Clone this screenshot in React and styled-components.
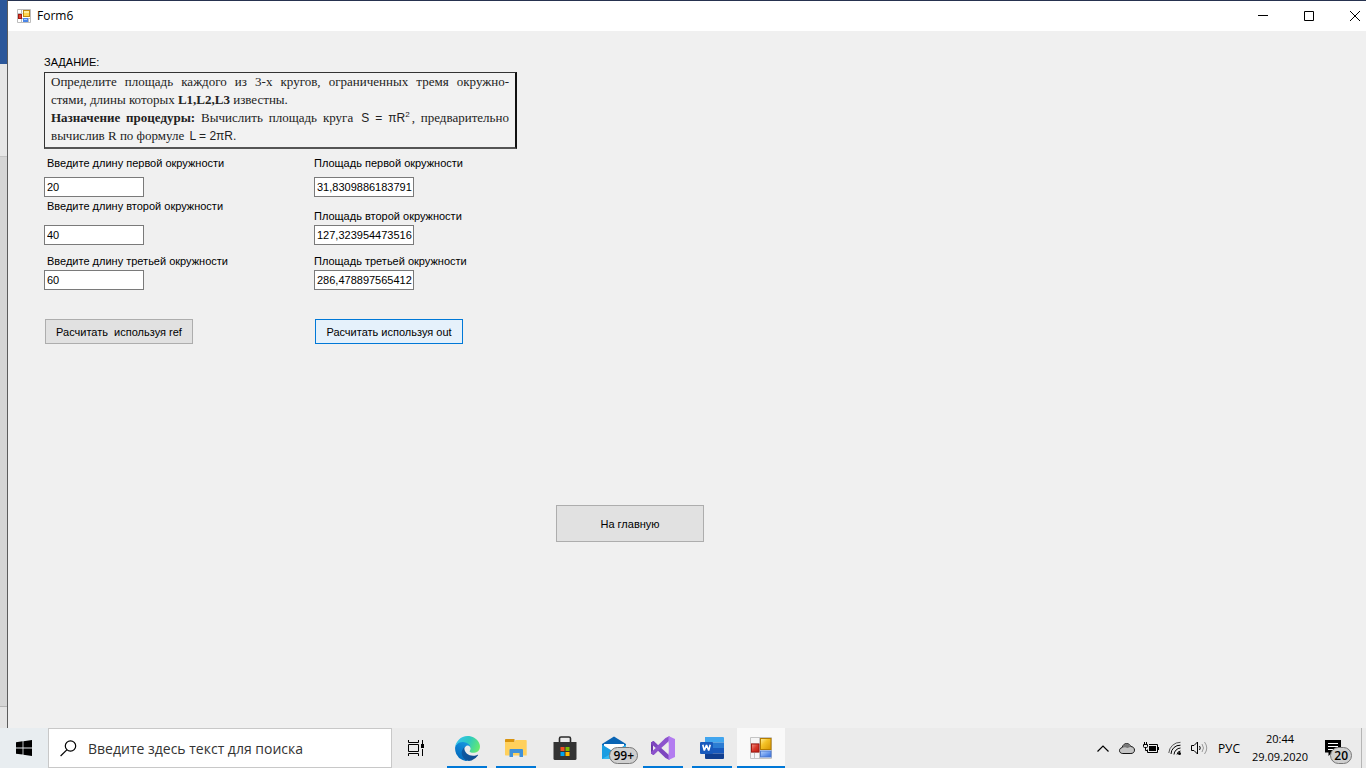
import { useState } from "react";
import styled, { createGlobalStyle } from "styled-components";

const GlobalStyle = createGlobalStyle`
  * {
    box-sizing: border-box;
  }

  body {
    margin: 0;
    overflow: hidden;
    font-family: "Liberation Sans", Arial, sans-serif;
    font-size: 11px;
    color: #000;
  }

  button,
  input {
    font-family: inherit;
    font-size: inherit;
    color: inherit;
  }
`;

const Screen = styled.div`
  display: flex;
  flex-direction: column;
  height: 100vh;
`;

const Desktop = styled.div`
  flex: 1;
  display: flex;
  min-height: 0;
`;

const BackWindow = styled.div`
  width: 7px;
  display: flex;
  flex-direction: column;
  background: #d5d5d5;
`;

const BackHeader = styled.div`
  height: 64px;
  background: #2b579a;
`;

const BackRibbon = styled.div`
  height: 93px;
  background: #e6e6e6;
  border-bottom: 1px solid #c4c4c4;
`;

const BackStatus = styled.div`
  height: 22px;
  margin-top: auto;
  background: #e4e4e4;
  border-top: 1px solid #b4b4b4;
`;

const Window = styled.div`
  flex: 1;
  display: flex;
  flex-direction: column;
  background: #f0f0f0;
  border-top: 1px solid #26324f;
  border-left: 1px solid #5c5c5c;
`;

const TitleBar = styled.header`
  height: 30px;
  display: flex;
  align-items: center;
  gap: 6px;
  padding: 0 6px 0 9px;
  background: #fff;
`;

const WindowTitle = styled.h1`
  flex: 1;
  margin: 0;
  font-family: "Open Sans", sans-serif;
  font-size: 12px;
  font-weight: 400;
  line-height: 16px;
`;

const WindowButtons = styled.div`
  display: flex;
  gap: 36px;
`;

const WindowButton = styled.button`
  display: flex;
  padding: 0;
  border: none;
  background: none;
`;

const Form = styled.main`
  flex: 1;
  padding: 24px 36px;
`;

const TaskLabel = styled.div`
  line-height: 14px;
`;

const TaskBox = styled.section`
  width: 473px;
  margin: 3px 0 7px;
  padding: 0 6px 2px;
  background: #f2f2f2;
  border: 1px solid #333;
  border-right: 2px solid #111;
  border-bottom: 2px solid #555;
  font-family: "Liberation Serif", "Times New Roman", serif;
  font-size: 13px;
  line-height: 18px;
  color: #222;
`;

const TaskLine = styled.div`
  white-space: nowrap;
  text-align-last: ${(props) => (props.$full ? "justify" : "left")};
`;

const Formula = styled.span`
  padding: 0 2px;
  font-family: "Liberation Sans", Arial, sans-serif;
  font-size: 12px;

  sup {
    font-size: 8px;
    line-height: 1;
  }
`;

const Columns = styled.div`
  display: flex;
`;

const Column = styled.div`
  width: 270px;
  display: flex;
  flex-direction: column;
  align-items: flex-start;
`;

const spaces = { none: 0, tight: 2, small: 7, medium: 9, wide: 12 };

const Field = styled.div`
  display: flex;
  flex-direction: column;
  gap: ${(props) => spaces[props.$gap]}px;
  margin-top: ${(props) => spaces[props.$before]}px;
`;

const FieldLabel = styled.label`
  padding-left: ${(props) => (props.$indent ? "3px" : "0")};
  line-height: 14px;
  white-space: nowrap;
`;

const TextBox = styled.input`
  width: 100px;
  height: 20px;
  padding: 0 0 0 2px;
  border: 1px solid #7a7a7a;
  border-radius: 0;
  background: #fff;
  outline: none;
`;

const Button = styled.button`
  height: ${(props) => (props.$large ? "37px" : "25px")};
  width: 148px;
  padding: 0;
  white-space: pre;
  border: 1px solid ${(props) => (props.$focused ? "#0078d7" : "#adadad")};
  background: ${(props) => (props.$focused ? "#e5f1fb" : "#e1e1e1")};
`;

const Actions = styled.div`
  display: flex;
  gap: 122px;
  padding-left: 1px;
  margin-top: 29px;
`;

const HomeRow = styled.div`
  margin-top: 161px;
  padding-left: 512px;
`;

const Taskbar = styled.footer`
  height: 40px;
  display: flex;
  background: #ebebeb;
  font-family: "Open Sans", sans-serif;
`;

const BarButton = styled.button`
  width: 48px;
  display: flex;
  align-items: center;
  justify-content: center;
  padding: 0;
  border: none;
  background: ${(props) => (props.$start ? "#e8edf0" : "none")};
`;

const Search = styled.label`
  width: 344px;
  display: flex;
  align-items: center;
  gap: 11px;
  padding: 0 11px;
  background: #fff;
  border: 1px solid #c8c8c8;
`;

const SearchInput = styled.input`
  flex: 1;
  min-width: 0;
  padding: 0;
  border: none;
  outline: none;
  background: none;
  font-size: 14px;

  &::placeholder {
    color: #333;
    opacity: 1;
  }
`;

const Apps = styled.nav`
  flex: 1;
  display: flex;
  gap: 1px;
  padding-left: 3px;
`;

const AppButton = styled.button`
  position: relative;
  width: 48px;
  display: flex;
  align-items: center;
  justify-content: center;
  padding: 0;
  border: none;
  background: ${(props) => (props.$active ? "#f9f9f9" : "none")};

  &::after {
    content: "";
    display: ${(props) => (props.$running ? "block" : "none")};
    position: absolute;
    bottom: 0;
    left: ${(props) => (props.$active ? "0" : "4px")};
    right: ${(props) => (props.$active ? "0" : "4px")};
    height: 2px;
    background: #0078d7;
  }
`;

const Badge = styled.span`
  position: absolute;
  right: ${(props) => (props.$corner ? "1px" : "0")};
  bottom: 4px;
  height: 17px;
  padding: 0 3px;
  border: 1px solid #777;
  border-radius: 9px;
  background: #cfcfcf;
  font-size: 12px;
  font-weight: 600;
  line-height: 15px;
  color: #000;
`;

const Tray = styled.div`
  display: flex;
  align-items: center;
`;

const TrayButton = styled.button`
  width: 24px;
  height: 40px;
  display: flex;
  align-items: center;
  justify-content: center;
  padding: 0;
  border: none;
  background: none;
`;

const Language = styled.button`
  width: 36px;
  padding: 0;
  border: none;
  background: none;
  font-size: 12px;
`;

const Clock = styled.time`
  width: 66px;
  font-size: 11px;
  line-height: 18px;
  text-align: center;
`;

const Notifications = styled.button`
  position: relative;
  width: 40px;
  height: 40px;
  display: flex;
  align-items: center;
  justify-content: center;
  padding: 0;
  border: none;
  background: none;
`;

const ShowDesktop = styled.button`
  width: 5px;
  height: 40px;
  margin-left: 8px;
  padding: 0;
  border: none;
  border-left: 1px solid #b5b5b5;
  background: none;
`;

const SmallFormIcon = () => (
  <svg width="14" height="14" viewBox="0 0 14 14">
    <path d="M.5.500h13v13H.5zM.5 4.500h5M4.500 .5v13M.5 9.500h13M11.500 9v4" fill="#fff" stroke="#bcbcbc" />
    <rect x="6.500" y="1.500" width="6" height="6" fill="#ffd64f" stroke="#c08a10" />
    <path d="M7 2h5v2H7z" fill="#ffec9c" />
    <rect x="1.500" y="5.500" width="3" height="4" fill="#e0402f" stroke="#a01a12" />
    <path d="M6 9h5v4H6z" fill="#4a86e8" />
    <path d="M7 10h3v1H7z" fill="#a5c8ff" />
  </svg>
);

const FormIcon = () => (
  <svg width="22" height="22" viewBox="0 0 22 22">
    <defs>
      <linearGradient id="formYellow" x1="0" y1="0" x2="1" y2="1">
        <stop offset="0" stopColor="#fff0a0" />
        <stop offset=".4" stopColor="#f5c327" />
        <stop offset="1" stopColor="#d69500" />
      </linearGradient>
      <linearGradient id="formRed" x1="0" y1="0" x2="1" y2="1">
        <stop offset="0" stopColor="#f49a8c" />
        <stop offset=".5" stopColor="#d8392b" />
        <stop offset="1" stopColor="#b81c10" />
      </linearGradient>
      <linearGradient id="formBlue" x1="0" y1="0" x2="1" y2="1">
        <stop offset="0" stopColor="#b5d3ff" />
        <stop offset="1" stopColor="#2d69dd" />
      </linearGradient>
    </defs>
    <path d="M.5.500h21v21H.5zM4.500 15.500v6M.5 15.500h9M.5 6.500h9M9.500 .5v21" fill="#f6f6f6" stroke="#c4c4c4" />
    <rect x="10.500" y="1.500" width="10.500" height="11" fill="url(#formYellow)" stroke="#b47c00" />
    <rect x="1.500" y="7" width="7.500" height="8" fill="url(#formRed)" stroke="#a51910" />
    <rect x="10.500" y="14" width="10.500" height="6" fill="url(#formBlue)" stroke="#4f7bd0" />
  </svg>
);

const StartIcon = () => (
  <svg width="16" height="16" viewBox="0 0 16 16">
    <path d="M0 2.2 6.6 1.3v6.2H0zM7.4 1.2 16 0v7.500H7.4zM0 8.4h6.6v6.2L0 13.7zM7.4 8.4H16V16l-8.6-1.2z" />
  </svg>
);

const SearchIcon = () => (
  <svg width="17" height="17" viewBox="0 0 17 17" fill="none" stroke="#000" strokeWidth="1.2">
    <circle cx="10.5" cy="6" r="5.2" />
    <path d="M6.8 9.8.6 16" />
  </svg>
);

const TaskViewIcon = () => (
  <svg width="18" height="16" viewBox="0 0 18 16" fill="none" stroke="#000">
    <path d="M1.5 0v2.5h10V0M1.5 16v-2.500h10V16M1.5 4.500h10v7h-10zM15.500 0v4M15.500 9v7" />
    <rect x="14" y="4" width="3" height="4" fill="#000" stroke="none" />
  </svg>
);

const EdgeIcon = () => (
  <svg width="25" height="25" viewBox="4 3 257 257">
    <defs>
      <linearGradient id="edgeNavy" x1="0" y1="0" x2="1" y2="0">
        <stop offset="0" stopColor="#0c59a4" />
        <stop offset="1" stopColor="#114a8b" />
      </linearGradient>
      <linearGradient id="edgeBlue" x1=".8" y1="0" x2=".3" y2="1">
        <stop offset="0" stopColor="#1b9de2" />
        <stop offset=".5" stopColor="#0d7fd0" />
        <stop offset="1" stopColor="#0067b8" />
      </linearGradient>
      <linearGradient id="edgeGreen" x1="0" y1=".3" x2="1" y2=".6">
        <stop offset="0" stopColor="#35c1f1" />
        <stop offset=".5" stopColor="#2dc9c0" />
        <stop offset="1" stopColor="#66eb6e" />
      </linearGradient>
    </defs>
    <path
      fill="url(#edgeNavy)"
      d="M235.68 195.46a93.73 93.73 0 0 1-10.54 4.71 101.87 101.87 0 0 1-35.9 6.46c-47.32 0-88.54-32.55-88.54-74.32A31.48 31.48 0 0 1 117.13 105c-42.8 1.8-53.8 46.4-53.8 72.53 0 73.88 68.09 81.37 82.76 81.37 7.91 0 19.84-2.3 27-4.56l1.31-.44a128.34 128.34 0 0 0 66.6-52.8 4 4 0 0 0-5.32-5.64z"
    />
    <path
      fill="url(#edgeBlue)"
      d="M110.34 246.34A79.2 79.2 0 0 1 87.6 225a80.72 80.72 0 0 1 29.53-120c3.12-1.47 8.45-4.13 15.54-4a32.35 32.35 0 0 1 25.69 13 31.88 31.88 0 0 1 6.36 18.66c0-.21 24.46-79.6-80-79.6-43.9 0-80 41.66-80 78.21a130.15 130.15 0 0 0 12.11 56 128 128 0 0 0 156.38 67.11 75.55 75.55 0 0 1-62.78-8z"
    />
    <path
      fill="url(#edgeGreen)"
      d="M156.94 153.78c-.81 1.05-3.3 2.5-3.3 5.66 0 2.61 1.7 5.12 4.72 7.23 14.38 10 41.49 8.68 41.56 8.68a59.56 59.56 0 0 0 30.27-8.35 61.38 61.38 0 0 0 30.43-52.88c.26-22.41-8-37.31-11.34-43.91C228.08 28.76 182.35 3.55 132.61 3.55a128 128 0 0 0-128 126.2c.48-36.54 36.8-66.05 80-66.05 3.5 0 23.46.34 42 10.07 16.34 8.58 24.9 18.94 30.85 29.21 6.18 10.67 7.28 24.15 7.28 29.52 0 5.37-2.74 13.33-7.8 21.28z"
    />
  </svg>
);

const FolderIcon = () => (
  <svg width="22" height="20" viewBox="0 0 22 20">
    <path d="M0 1.8Q0 1 .8 1h8.700v3H0z" fill="#d9940f" />
    <path d="M0 4h9.500l1-2H21q.7 0 .7.7V17.500H.7q-.7 0-.7-.7z" fill="#ffd05c" />
    <path d="M4.500 12q0-1 1-1h11.500q1 0 1 1v7h-3.500v-4H8v4H4.500z" fill="#3f91d9" />
  </svg>
);

const StoreIcon = () => (
  <svg width="24" height="24" viewBox="0 0 24 24">
    <path d="M6.500 7V2.500Q6.500 1 8 1h8q1.500 0 1.500 1.500V7" fill="none" stroke="#2b2b2b" strokeWidth="1.6" />
    <path d="M.5 6h23v16.500q0 1.500-1.500 1.500H2Q.5 24 .5 22.500z" fill="#333" />
    <path d="M7.500 11h4v4h-4z" fill="#f25022" />
    <path d="M12.500 11h4v4h-4z" fill="#7fba00" />
    <path d="M7.500 16h4v4h-4z" fill="#00a4ef" />
    <path d="M12.500 16h4v4h-4z" fill="#ffb900" />
  </svg>
);

const MailIcon = () => (
  <svg width="24" height="24" viewBox="0 0 24 24">
    <path d="M0 8 12 .5 24 8v4H0z" fill="#0a64b4" />
    <path d="M2 8h20v7H2z" fill="#fff" />
    <path d="M0 8.500 12 16l12-7.500V23H0z" fill="#1b9de2" />
    <path d="M0 23 24 9v14z" fill="#35b8f1" />
  </svg>
);

const StudioIcon = () => (
  <svg width="24" height="24" viewBox="0 0 24 24">
    <path d="M0 6.500 2.500 5 6 8.500v7L2.500 19 0 17.500z" fill="#6a35a8" />
    <path d="M0 6.500 2.500 5 18.500 19.500V24L14.500 22 0 8z" fill="#7d45bf" />
    <path d="M0 17.500 2.500 19 18.500 4.500V0L14.500 2 0 16z" fill="#8c52cc" />
    <path d="M2 9.500 4.800 12 2 14.500z" fill="#ebebeb" />
    <path d="M17.500 0 24 3v18l-6.500 3z" fill="#b37cf0" />
    <path d="M17.500 7v10L11.500 12z" fill="#ebebeb" />
  </svg>
);

const WordIcon = () => (
  <svg width="24" height="22" viewBox="0 0 24 22">
    <path d="M5 0h18q1 0 1 1v4.500H5z" fill="#41a5ee" />
    <path d="M5 5.500h19V11H5z" fill="#2b7cd3" />
    <path d="M5 11h19v5.500H5z" fill="#185abd" />
    <path d="M5 16.500h19V21q0 1-1 1H6q-1 0-1-1z" fill="#103f91" />
    <rect x="0" y="5" width="13" height="12" rx="1" fill="#185abd" />
    <path
      d="m2.800 7.800 1.500 5.700 2.200-5.500 2.200 5.500 1.500-5.700"
      fill="none"
      stroke="#fff"
      strokeWidth="1.600"
      strokeLinejoin="bevel"
    />
  </svg>
);

const CloudIcon = () => (
  <svg width="16" height="11" viewBox="0 0 16 11">
    <path
      d="M3.800 10.500C1.900 10.500.5 9.300.5 7.600S1.700 4.800 3.200 4.600C3.600 2.200 5.300.600 7.600.600c2 0 3.400 1 4.100 2.900 2.200.1 3.800 1.500 3.800 3.600s-1.500 3.400-3.600 3.400z"
      fill="#c4c4c4"
      stroke="#111"
    />
    <path d="M3.500 4.700C4 2.300 5.500 1.100 7.500 1.100S10.700 2 11.200 4L8.500 5 6 4.300z" fill="#777" />
  </svg>
);

const BatteryIcon = () => (
  <svg width="16" height="12" viewBox="0 0 16 12" fill="none" stroke="#000">
    <path d="M1.500 0v2M3.500 0v2M.5 2.500h4v2q0 1-1 1h-2q-1 0-1-1zM2.500 5.500v3h2M6 2.500h8.500v8h-10v-3M15.500 5v3" />
    <path d="M6 4h7v5H6z" fill="#000" stroke="none" />
  </svg>
);

const WifiIcon = () => (
  <svg width="14" height="14" viewBox="0 0 14 14" fill="none" stroke="#000">
    <path d="M.8 12A11.500 11.500 0 0 1 12.500 1.300" stroke="#555" />
    <path d="M3 13A9 9 0 0 1 12.500 4.200M6 13.500a7 7 0 0 1 6.500-6.500M9 13.500a4 4 0 0 1 3.500-3.500" />
    <circle cx="11.500" cy="12.500" r="1.500" fill="#000" stroke="none" />
  </svg>
);

const VolumeIcon = () => (
  <svg width="17" height="14" viewBox="0 0 17 14" fill="none" stroke="#000">
    <path d="M.5 4.500h2.500L6.500 1v12L3 9.500H.5z" />
    <path d="M8.500 5q1.500 2 0 4" />
    <path d="M11 3q3 4 0 8M13.500 1q4.500 6 0 12" stroke="#999" />
  </svg>
);

const NoteIcon = () => (
  <svg width="16" height="16" viewBox="0 0 16 16">
    <path d="M0 0h16v12.500H7L3.500 16v-3.500H0z" />
    <path d="M3 3.500h10M3 6.500h10M3 9.500h7" stroke="#fff" />
  </svg>
);

const lengthFields = [
  { id: "l1", label: "Введите длину первой окружности", before: "none", gap: "small" },
  { id: "l2", label: "Введите длину второй окружности", before: "tight", gap: "wide" },
  { id: "l3", label: "Введите длину третьей окружности", before: "medium", gap: "tight" },
];

const areaFields = [
  { id: "s1", label: "Площадь первой окружности", before: "none", gap: "small" },
  { id: "s2", label: "Площадь второй окружности", before: "wide", gap: "tight" },
  { id: "s3", label: "Площадь третьей окружности", before: "medium", gap: "tight" },
];

const apps = [
  { name: "Microsoft Edge", icon: <EdgeIcon />, running: true },
  { name: "Проводник", icon: <FolderIcon />, running: true },
  { name: "Microsoft Store", icon: <StoreIcon /> },
  { name: "Почта", icon: <MailIcon />, badge: "99+" },
  { name: "Visual Studio", icon: <StudioIcon />, running: true },
  { name: "Word", icon: <WordIcon />, running: true },
  { name: "Form6", icon: <FormIcon />, running: true, active: true },
];

const App = () => {
  const [values, setValues] = useState({
    l1: "20",
    l2: "40",
    l3: "60",
    s1: "31,8309886183791",
    s2: "127,323954473516",
    s3: "286,478897565412",
  });

  const handleChange = (e) => {
    setValues({ ...values, [e.target.id]: e.target.value });
  };

  const calculate = () => {
    const next = { ...values };
    [1, 2, 3].forEach((n) => {
      const length = parseFloat(values["l" + n].replace(",", "."));
      const area = (length * length) / (4 * Math.PI);
      next["s" + n] = String(Number(area.toPrecision(15))).replace(".", ",");
    });
    setValues(next);
  };

  const renderField = (field, indent) => (
    <Field key={field.id} $before={field.before} $gap={field.gap}>
      <FieldLabel htmlFor={field.id} $indent={indent}>
        {field.label}
      </FieldLabel>
      <TextBox id={field.id} value={values[field.id]} onChange={handleChange} />
    </Field>
  );

  return (
    <Screen>
      <GlobalStyle />
      <Desktop>
        <BackWindow>
          <BackHeader />
          <BackRibbon />
          <BackStatus />
        </BackWindow>
        <Window>
          <TitleBar>
            <SmallFormIcon />
            <WindowTitle>Form6</WindowTitle>
            <WindowButtons>
              <WindowButton aria-label="Свернуть">
                <svg width="10" height="10" stroke="#000">
                  <path d="M0 4.500h10" />
                </svg>
              </WindowButton>
              <WindowButton aria-label="Развернуть">
                <svg width="10" height="10" stroke="#000" fill="none">
                  <path d="M.5.500h9v9h-9z" />
                </svg>
              </WindowButton>
              <WindowButton aria-label="Закрыть">
                <svg width="10" height="10" stroke="#000">
                  <path d="m0 0 10 10M10 0 0 10" />
                </svg>
              </WindowButton>
            </WindowButtons>
          </TitleBar>
          <Form>
            <TaskLabel>ЗАДАНИЕ:</TaskLabel>
            <TaskBox>
              <TaskLine $full>
                Определите площадь каждого из 3-х кругов, ограниченных тремя окружно-
              </TaskLine>
              <TaskLine>
                стями, длины которых <b>L1,L2,L3</b> известны.
              </TaskLine>
              <TaskLine $full>
                <b>Назначение процедуры:</b> Вычислить площадь круга{" "}
                <Formula>
                  S = πR<sup>2</sup>
                </Formula>
                , предварительно
              </TaskLine>
              <TaskLine>
                вычислив R по формуле <Formula>L = 2πR.</Formula>
              </TaskLine>
            </TaskBox>
            <Columns>
              <Column>{lengthFields.map((field) => renderField(field, true))}</Column>
              <Column>{areaFields.map((field) => renderField(field, false))}</Column>
            </Columns>
            <Actions>
              <Button onClick={calculate}>{"Расчитать  используя ref"}</Button>
              <Button $focused onClick={calculate}>
                Расчитать используя out
              </Button>
            </Actions>
            <HomeRow>
              <Button $large>На главную</Button>
            </HomeRow>
          </Form>
        </Window>
      </Desktop>
      <Taskbar>
        <BarButton $start aria-label="Пуск">
          <StartIcon />
        </BarButton>
        <Search>
          <SearchIcon />
          <SearchInput placeholder="Введите здесь текст для поиска" />
        </Search>
        <BarButton aria-label="Представление задач">
          <TaskViewIcon />
        </BarButton>
        <Apps>
          {apps.map((app) => (
            <AppButton
              key={app.name}
              aria-label={app.name}
              $running={app.running}
              $active={app.active}
            >
              {app.icon}
              {app.badge && <Badge>{app.badge}</Badge>}
            </AppButton>
          ))}
        </Apps>
        <Tray>
          <TrayButton aria-label="Скрытые значки">
            <svg width="12" height="7" fill="none" stroke="#000" strokeWidth="1.200">
              <path d="m.5 6.500 5.500-5.500 5.500 5.500" />
            </svg>
          </TrayButton>
          <TrayButton aria-label="OneDrive">
            <CloudIcon />
          </TrayButton>
          <TrayButton aria-label="Батарея">
            <BatteryIcon />
          </TrayButton>
          <TrayButton aria-label="Сеть">
            <WifiIcon />
          </TrayButton>
          <TrayButton aria-label="Громкость">
            <VolumeIcon />
          </TrayButton>
          <Language>РУС</Language>
          <Clock>
            20:44
            <br />
            29.09.2020
          </Clock>
          <Notifications aria-label="Уведомления">
            <NoteIcon />
            <Badge $corner>20</Badge>
          </Notifications>
          <ShowDesktop aria-label="Свернуть все окна" />
        </Tray>
      </Taskbar>
    </Screen>
  );
};

export default App;
